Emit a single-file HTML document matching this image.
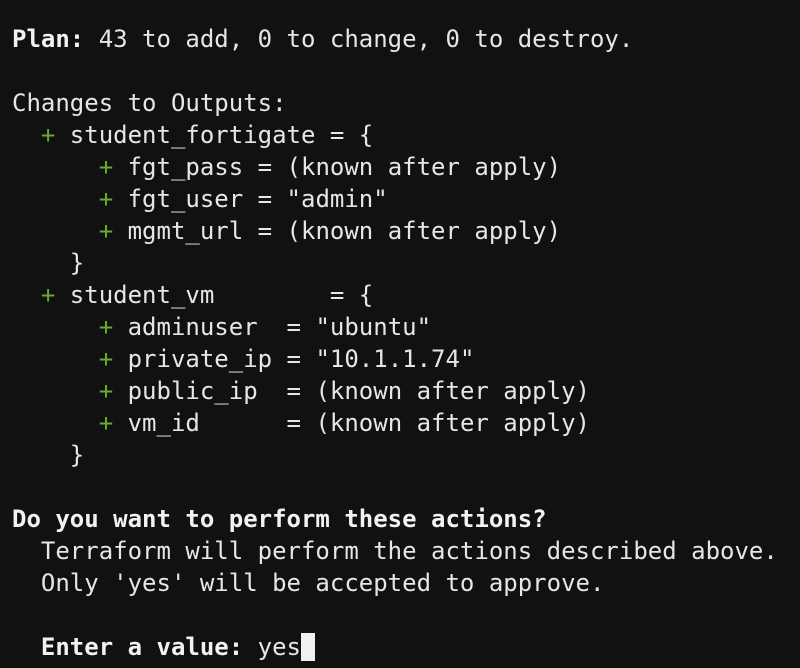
<!DOCTYPE html>
<html><head><style>
html,body{margin:0;padding:0;background:#111111;width:800px;height:668px;overflow:hidden}
pre{margin:0;position:absolute;left:12px;top:23px;font-family:"DejaVu Sans Mono","Liberation Mono",monospace;font-size:24px;line-height:32px;color:#e6e6e6}
b{font-weight:bold;color:#f2f2f2}
.g{color:#6aa830}
.c{display:inline-block;width:14px;height:28px;background:#f0f0f0;vertical-align:-6px}
</style></head><body>
<pre><b>Plan:</b> 43 to add, 0 to change, 0 to destroy.

Changes to Outputs:
  <span class="g">+</span> student_fortigate = {
      <span class="g">+</span> fgt_pass = (known after apply)
      <span class="g">+</span> fgt_user = "admin"
      <span class="g">+</span> mgmt_url = (known after apply)
    }
  <span class="g">+</span> student_vm        = {
      <span class="g">+</span> adminuser  = "ubuntu"
      <span class="g">+</span> private_ip = "10.1.1.74"
      <span class="g">+</span> public_ip  = (known after apply)
      <span class="g">+</span> vm_id      = (known after apply)
    }

<b>Do you want to perform these actions?</b>
  Terraform will perform the actions described above.
  Only 'yes' will be accepted to approve.

  <b>Enter a value:</b> yes<span class="c"></span></pre>
</body></html>
